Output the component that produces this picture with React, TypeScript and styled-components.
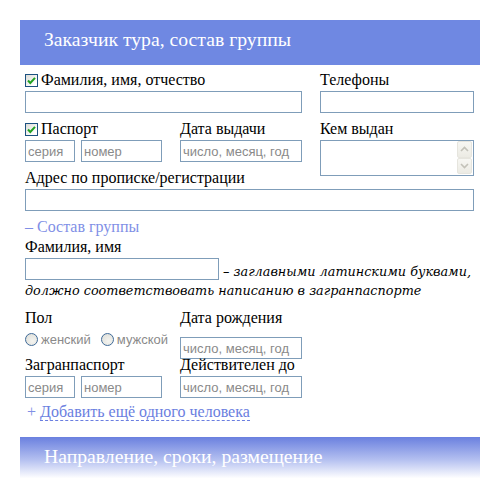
import React from "react";
import styled, { createGlobalStyle } from "styled-components";

const Global = createGlobalStyle`
  html, body { margin: 0; padding: 0; background: #fff; }
  body { font-family: "Liberation Serif", serif; color: #000; }
  * { box-sizing: border-box; }
`;

const Page = styled.div`
  width: 460px;
  margin: 20px 0 0 20px;
`;

const SectionHeader = styled.h2<{ $fade?: boolean }>`
  margin: 0;
  height: 45px;
  padding: 7px 0 0 24px;
  font-family: "Liberation Serif", serif;
  font-weight: normal;
  font-size: 19.7px;
  line-height: 24px;
  color: #fff;
  background: ${(p) =>
    p.$fade ? "linear-gradient(to bottom, #6a80df 0%, #b3bff0 50%, #ffffff 92%)" : "#6f88e2"};
`;

const Body = styled.div`
  padding-left: 5px;
`;

const Grid = styled.div<{ $mt: number }>`
  display: grid;
  grid-template-columns: 137px 122px 154px;
  column-gap: 18px;
  align-items: start;
  margin-top: ${(p) => p.$mt}px;
`;

const Field = styled.div<{ $span?: number }>`
  display: flex;
  flex-direction: column;
  grid-column: span ${(p) => p.$span ?? 1};
`;

const Label = styled.label<{ $mb?: number }>`
  display: flex;
  align-items: center;
  gap: 3px;
  height: 16px;
  font-family: "Liberation Serif", serif;
  font-size: 16px;
  line-height: 16px;
  white-space: nowrap;
  margin-bottom: ${(p) => p.$mb ?? 3}px;
`;

const Input = styled.input<{ $w?: number }>`
  display: block;
  width: ${(p) => (p.$w ? `${p.$w}px` : "100%")};
  height: 22px;
  margin: 0;
  padding: 0 2px;
  border: 1px solid #7f9db9;
  background: #fff;
  font-family: "Liberation Sans", Arial, sans-serif;
  font-size: 13px;
  color: #000;
  outline: none;
  &::placeholder { color: #8a8a8a; }
`;

const Pair = styled.div`
  display: flex;
  gap: 6px;
`;

const CheckBox = styled.span`
  display: inline-flex;
  width: 13px;
  height: 13px;
  border: 1px solid #1c5180;
  background: linear-gradient(135deg, #dcdcd7 0%, #fff 80%);
  flex: none;
`;

const AreaBox = styled.div`
  display: flex;
  height: 36px;
  margin-bottom: -14px;
  border: 1px solid #7f9db9;
  background: #fff;
`;

const Area = styled.textarea`
  flex: 1;
  border: none;
  resize: none;
  outline: none;
  margin: 0;
  padding: 2px;
  font-family: "Liberation Sans", Arial, sans-serif;
  font-size: 13px;
`;

const ScrollCol = styled.div`
  display: flex;
  flex-direction: column;
  padding: 0 1px 1px 0;
`;

const ScrollBtn = styled.span`
  display: flex;
  align-items: center;
  justify-content: center;
  width: 15px;
  height: 17px;
  border: 1px solid #e6e5de;
  border-radius: 2px;
  background: linear-gradient(to bottom, #f7f7f3, #ecebe4);
`;

const Toggle = styled.div<{ $mt: number }>`
  margin-top: ${(p) => p.$mt}px;
  font-family: "Liberation Serif", serif;
  font-size: 16px;
  line-height: 16px;
  color: #7f8fe6;
`;

const Note = styled.p`
  margin: 0;
  padding-top: 4px;
  font-family: "DejaVu Serif", serif;
  font-style: italic;
  font-size: 12.8px;
  line-height: 19px;
  width: 460px;
`;

const NoteInput = styled(Input)`
  display: inline-block;
  vertical-align: top;
  margin-top: -4px;
`;

const RadioGroup = styled.div`
  display: flex;
  align-items: center;
  height: 15px;
  font-family: "Liberation Sans", Arial, sans-serif;
  font-size: 13px;
  color: #8a8a8a;
`;

const RadioOpt = styled.span`
  display: inline-flex;
  align-items: center;
  gap: 3px;
  margin-right: 10px;
`;

const RadioDot = styled.span`
  display: inline-block;
  width: 13px;
  height: 13px;
  border-radius: 50%;
  border: 1px solid #3f6a98;
  background: radial-gradient(circle at 60% 65%, #f4f4f0 0%, #dcdcd6 100%);
`;

const AddRow = styled.div<{ $mt: number }>`
  margin-top: ${(p) => p.$mt}px;
  padding-left: 2px;
  font-family: "Liberation Serif", serif;
  font-size: 16px;
  line-height: 16px;
  color: #7f8fe6;
`;

const DashedLink = styled.a`
  color: #6a7ee0;
  text-decoration: none;
  border-bottom: 1px dashed #6a7ee0;
  margin-left: 4px;
`;

const Spacer = styled.div<{ $h: number }>`
  height: ${(p) => p.$h}px;
`;

const Check = () => (
  <CheckBox>
    <svg width="11" height="11" viewBox="0 0 11 11">
      <path d="M2 5.5 L4.3 8 L9 2.8" fill="none" stroke="#21a121" strokeWidth="2" />
    </svg>
  </CheckBox>
);

const Arrow = ({ up }: { up?: boolean }) => (
  <svg width="9" height="6" viewBox="0 0 9 6">
    <path
      d={up ? "M1 5 L4.5 1.5 L8 5" : "M1 1 L4.5 4.5 L8 1"}
      fill="none"
      stroke="#c3c2b9"
      strokeWidth="1.6"
    />
  </svg>
);

export default function App() {
  return (
    <>
      <Global />
      <Page>
        <SectionHeader>Заказчик тура, состав группы</SectionHeader>
        <Body>
          <Grid $mt={7}>
            <Field $span={2}>
              <Label>
                <Check />
                Фамилия, имя, отчество
              </Label>
              <Input />
            </Field>
            <Field>
              <Label>Телефоны</Label>
              <Input />
            </Field>
          </Grid>

          <Grid $mt={8}>
            <Field>
              <Label>
                <Check />
                Паспорт
              </Label>
              <Pair>
                <Input $w={50} placeholder="серия" />
                <Input $w={81} placeholder="номер" />
              </Pair>
            </Field>
            <Field>
              <Label>Дата выдачи</Label>
              <Input placeholder="число, месяц, год" />
            </Field>
            <Field>
              <Label>Кем выдан</Label>
              <AreaBox>
                <Area />
                <ScrollCol>
                  <ScrollBtn>
                    <Arrow up />
                  </ScrollBtn>
                  <ScrollBtn>
                    <Arrow />
                  </ScrollBtn>
                </ScrollCol>
              </AreaBox>
            </Field>
          </Grid>

          <Grid $mt={8}>
            <Field $span={3}>
              <Label>Адрес по прописке/регистрации</Label>
              <Input />
            </Field>
          </Grid>

          <Toggle $mt={8}>– Состав группы</Toggle>

          <Grid $mt={4}>
            <Field $span={3}>
              <Label>Фамилия, имя</Label>
            </Field>
          </Grid>
          <Note>
            <NoteInput $w={194} /> – заглавными латинскими буквами, должно соответствовать
            написанию в загранпаспорте
          </Note>

          <Grid $mt={10}>
            <Field>
              <Label $mb={6}>Пол</Label>
              <RadioGroup>
                <RadioOpt>
                  <RadioDot />
                  женский
                </RadioOpt>
                <RadioOpt>
                  <RadioDot />
                  мужской
                </RadioOpt>
              </RadioGroup>
            </Field>
            <Field>
              <Label $mb={11}>Дата рождения</Label>
              <Input placeholder="число, месяц, год" />
            </Field>
          </Grid>

          <Grid $mt={-2}>
            <Field>
              <Label>Загранпаспорт</Label>
              <Pair>
                <Input $w={50} placeholder="серия" />
                <Input $w={81} placeholder="номер" />
              </Pair>
            </Field>
            <Field>
              <Label>Действителен до</Label>
              <Input placeholder="число, месяц, год" />
            </Field>
          </Grid>

          <AddRow $mt={6}>
            +<DashedLink href="#">Добавить ещё одного человека</DashedLink>
          </AddRow>
        </Body>
        <Spacer $h={17} />
        <SectionHeader $fade>Направление, сроки, размещение</SectionHeader>
      </Page>
    </>
  );
}
